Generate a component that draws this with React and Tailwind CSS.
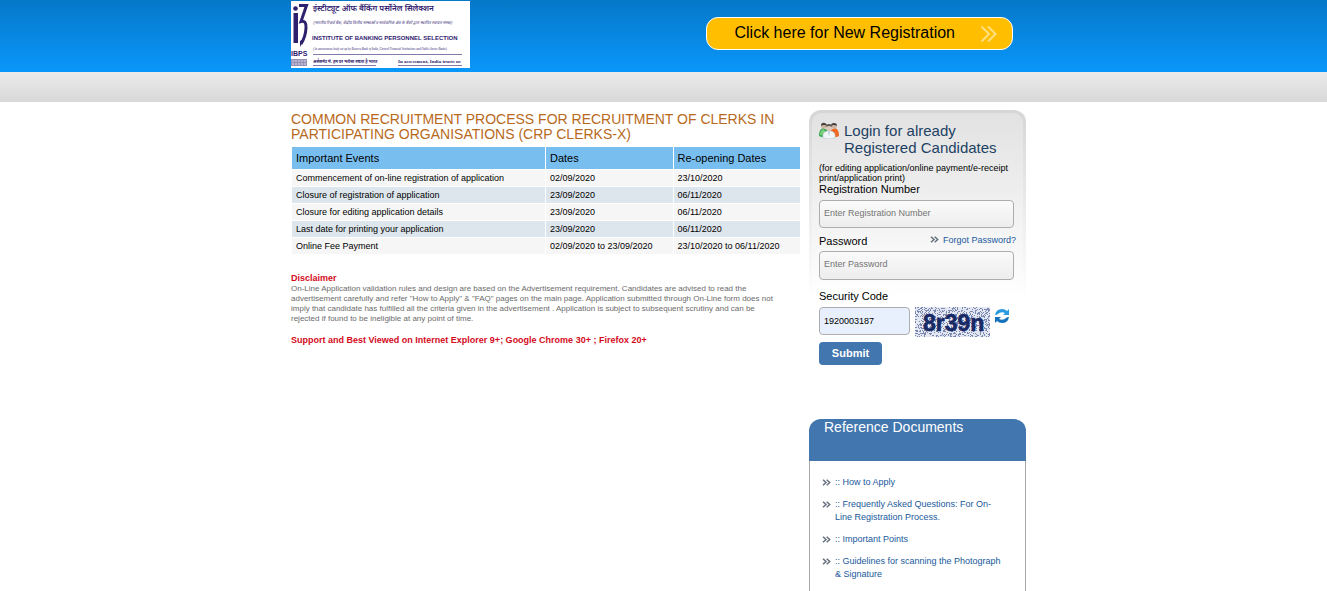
import React from "react";

const events = [
  ["Commencement of on-line registration of application", "02/09/2020", "23/10/2020"],
  ["Closure of registration of application", "23/09/2020", "06/11/2020"],
  ["Closure for editing application details", "23/09/2020", "06/11/2020"],
  ["Last date for printing your application", "23/09/2020", "06/11/2020"],
  ["Online Fee Payment", "02/09/2020 to 23/09/2020", "23/10/2020 to 06/11/2020"],
];

const documents = [
  "How to Apply",
  "Frequently Asked Questions: For On-Line Registration Process.",
  "Important Points",
  "Guidelines for scanning the Photograph & Signature",
];

function speckles(count, width, height) {
  let seed = 4271;
  const next = () => {
    seed = (seed * 16807) % 2147483647;
    return seed / 2147483647;
  };
  let d = "";
  for (let i = 0; i < count; i += 1) {
    d += `M${Math.floor(next() * width)} ${Math.floor(next() * height)}h1v1h-1z`;
  }
  return d;
}

const darkDots = speckles(900, 75, 30);

function Logo() {
  const hindi = "'Noto Sans Devanagari', 'Noto Sans', 'Lohit Devanagari', sans-serif";
  return (
    <svg viewBox="0 0 179 67" className="block h-[67px] w-[179px] shrink-0 bg-white" role="img" aria-label="Institute of Banking Personnel Selection">
      <g fill="#30216f">
        <circle cx="4.500" cy="7.500" r="2.300" />
        <path d="M2.500 12H7V42H2.500z" />
        <path d="M8 4.500H15.500L10 20.500Q15.500 19 15 27Q14.500 36 10 43" fill="none" stroke="#30216f" strokeWidth="3" />
        <path d="M9 40L14 37L9 46z" />
        <text x="0" y="55" fontFamily="'Liberation Sans', sans-serif" fontWeight="700" fontSize="7">IBPS</text>
        <path d="M0 58h16v7H0z" opacity=".5" />
        <path d="M1 60h14M1 63h14" stroke="#fff" strokeWidth="1" strokeDasharray="2 1" opacity=".7" />
        <text x="22" y="10" fontFamily={hindi} fontWeight="600" fontSize="8">इंस्टीट्यूट ऑफ बैंकिंग पर्सोनेल सिलेक्शन</text>
        <text x="22" y="23" fontFamily={hindi} fontStyle="italic" fontSize="4">(भारतीय रिज़र्व बैंक, केंद्रीय वित्तीय संस्थाओं व सार्वजनिक क्षेत्र के बैंकों द्वारा स्थापित स्वायत्त संस्था)</text>
        <text x="21" y="39" fontFamily="'Liberation Sans', sans-serif" fontWeight="700" fontSize="6">INSTITUTE OF BANKING PERSONNEL SELECTION</text>
        <text x="22" y="49" fontFamily="'Liberation Serif', serif" fontStyle="italic" fontSize="3">(An autonomous body set up by Reserve Bank of India, Central Financial Institutions and Public Sector Banks)</text>
        <path d="M22 53h149v1H22zM22 64h63v1H22zM107 64h64v1h-64z" opacity=".6" />
        <text x="22" y="62" fontFamily={hindi} fontWeight="700" fontSize="4">असेसमेंट में, हम पर भरोसा रखता है भारत</text>
        <text x="107" y="62" fontFamily="'Liberation Serif', serif" fontWeight="700" fontSize="5">In assessment, India trusts us</text>
      </g>
    </svg>
  );
}

function Chevrons({ className }) {
  return (
    <svg viewBox="0 0 9 7" className={className} fill="none" stroke="currentColor" strokeWidth="1.5" aria-hidden="true">
      <path d="M1 .7L4 3.5L1 6.3M4.7 .7L7.7 3.5L4.7 6.3" />
    </svg>
  );
}

function LargeChevrons() {
  return (
    <svg viewBox="0 0 18 18" className="mt-[2px] h-[18px] w-[18px] shrink-0" fill="none" stroke="#ffdf80" strokeWidth="2" aria-hidden="true">
      <path d="M1.500 1.500L9 9L1.500 16.500M8 1.500L15.500 9L8 16.500" />
    </svg>
  );
}

function People() {
  return (
    <svg viewBox="0 0 20 17" className="h-[17px] w-5 shrink-0" aria-hidden="true">
      <path d="M0 14Q0 7 4 6L9 8L8 15Q3 16 0 14z" fill="#35a853" />
      <path d="M1 13Q1 8 5 7L6 10Q4 14 1 13z" fill="#7ccf7c" />
      <path d="M20 14Q20 7 16 6L11 8L12 15Q17 16 20 14z" fill="#ee6a24" />
      <circle cx="5" cy="4" r="2.8" fill="#cdb5a3" />
      <path d="M2 4Q2 0 6 1Q8 2 8 4Q5 2 2 4z" fill="#46413f" />
      <circle cx="15" cy="4" r="2.8" fill="#cdb5a3" />
      <path d="M12 4Q12 1 15 1Q18 1 18 4Q15 2 12 4z" fill="#46413f" />
      <path d="M4 16Q3 10 8 9H12Q17 10 16 16Q10 18 4 16z" fill="#f1f5f8" stroke="#b9c5cd" strokeWidth=".6" />
      <circle cx="10" cy="6" r="3" fill="#dcc8ba" />
      <path d="M7 5Q7 2 10 2Q13 2 13 5Q10 3 7 5z" fill="#5b5552" />
      <path d="M9 9.500h2l-1 5z" fill="#a8cce0" />
    </svg>
  );
}

function Captcha() {
  return (
    <svg viewBox="0 0 75 30" className="ml-[5px] h-[30px] w-[75px] shrink-0 bg-[#e3e7f2]" role="img" aria-label="Security code image">
      <path d={darkDots} fill="#7a88b2" />
      <text x="8" y="24" fontFamily="'Liberation Sans', sans-serif" fontWeight="700" fontSize="23" fill="#182a66" stroke="#182a66" strokeWidth=".6">8r39n</text>
    </svg>
  );
}

function Refresh() {
  return (
    <svg viewBox="0 0 16 16" className="block h-4 w-4" aria-hidden="true">
      <path d="M1 7Q2 1 8 1Q11 1 13 3L15 1V7H9L11 5Q7 3 4 6Q3 7 1 7z" fill="#2a9be0" />
      <path d="M15 9Q14 15 8 15Q5 15 3 13L1 15V9H7L5 11Q9 13 12 10Q13 9 15 9z" fill="#1673bb" />
    </svg>
  );
}

const field =
  "block w-full rounded border border-[#adadad] bg-linear-to-b from-[#fafafa] to-[#ededed] px-1 pb-[3px] text-[9px] text-black outline-none placeholder:text-[#757575]";

export default function App() {
  return (
    <div className="flex min-h-screen flex-col bg-white font-['Liberation_Sans',Arial,sans-serif] text-black">
      <header className="bg-linear-to-b from-[#0578c8] to-[#0a97fb]">
        <div className="mx-auto flex h-[72px] w-full max-w-[745px] items-start justify-between pt-px pr-[23px]">
          <Logo />
          <a href="#register" className="mt-4 flex h-[33px] items-center gap-[25px] rounded-xl border border-white bg-[#ffbf00] pr-[14px] pb-px pl-[27px] text-[16px]">
            Click here for New Registration
            <LargeChevrons />
          </a>
        </div>
      </header>
      <div className="h-[30px] bg-linear-to-b from-[#ebebeb] to-[#d8d8d8]" />

      <main className="mx-auto flex w-full max-w-[745px] flex-1 gap-2 pr-[10px]">
        <section className="min-w-0 flex-1 pt-[10px]">
          <h1 className="text-[14px] leading-[15px] text-[#b8691b]">
            COMMON RECRUITMENT PROCESS FOR RECRUITMENT OF CLERKS IN PARTICIPATING ORGANISATIONS (CRP CLERKS-X)
          </h1>
          <table className="mt-1 w-full table-fixed border-separate border-spacing-px text-left">
            <thead>
              <tr className="h-[22px] bg-[#78bff0] text-[11px]">
                <th className="w-1/2 px-1 py-0 font-normal">Important Events</th>
                <th className="w-1/4 px-1 py-0 font-normal">Dates</th>
                <th className="w-1/4 px-1 py-0 font-normal">Re-opening Dates</th>
              </tr>
            </thead>
            <tbody>
              {events.map((row) => (
                <tr key={row[0]} className="h-4 bg-[#f6f6f6] text-[9px] leading-[14px] even:bg-[#dde6ed]">
                  {row.map((cell, i) => (
                    <td key={i} className="px-1 py-0 whitespace-nowrap">{cell}</td>
                  ))}
                </tr>
              ))}
            </tbody>
          </table>
          <h2 className="mt-[17px] text-[9px] leading-[12px] font-bold text-[#d40a1c]">Disclaimer</h2>
          <p className="pr-5 text-[8px] leading-[10px] text-[#6b6b6b]">
            On-Line Application validation rules and design are based on the Advertisement requirement. Candidates are advised to read the advertisement carefully and refer "How to Apply" &amp; "FAQ" pages on the main page. Application submitted through On-Line form does not imply that candidate has fulfilled all the criteria given in the advertisement . Application is subject to subsequent scrutiny and can be rejected if found to be ineligible at any point of time.
          </p>
          <p className="mt-[10px] text-[9px] leading-[12px] font-bold text-[#d40a1c]">
            Support and Best Viewed on Internet Explorer 9+; Google Chrome 30+ ; Firefox 20+
          </p>
        </section>

        <aside className="flex w-[217px] shrink-0 flex-col pt-2">
          <form className="rounded-t-xl bg-linear-to-b from-[#d6d6d6] to-white to-[190px] px-[3px] pt-[3px]" onSubmit={(e) => e.preventDefault()}>
            <div className="rounded-t-[10px] bg-linear-to-b from-[#e2e2e2] to-white to-[185px] px-[7px] pt-[9px]">
              <div className="flex gap-[5px]">
                <People />
                <h2 className="text-[15px] leading-[17px] text-[#1d4163]">Login for already<br />Registered Candidates</h2>
              </div>
              <p className="mt-[7px] text-[9px] leading-[10px]">(for editing application/online payment/e-receipt print/application print)</p>
              <label htmlFor="reg" className="block text-[11px] leading-[13px]">Registration Number</label>
              <div className="pt-1 pr-[2px]">
                <input id="reg" type="text" placeholder="Enter Registration Number" className={`${field} h-7`} />
              </div>
              <div className="mt-[3px] flex items-center justify-between">
                <label htmlFor="pwd" className="pt-1 text-[11px] leading-[13px]">Password</label>
                <a href="#forgot" className="flex items-center gap-1 text-[9px] leading-[12px] text-[#19599c]">
                  <Chevrons className="h-[7px] w-[9px] text-[#66717e]" />
                  Forgot Password?
                </a>
              </div>
              <div className="pt-[3px] pr-[2px]">
                <input id="pwd" type="password" placeholder="Enter Password" className={`${field} h-[29px]`} />
              </div>
              <label htmlFor="code" className="mt-[10px] block text-[11px] leading-[13px]">Security Code</label>
              <div className="mt-1 flex items-start">
                <input id="code" type="text" defaultValue="1920003187" className="h-7 w-[91px] rounded border border-[#adadad] bg-[#e8f0fe] px-1 text-[9px] outline-none" />
                <Captcha />
                <button type="button" aria-label="Refresh security code" className="mt-px ml-1">
                  <Refresh />
                </button>
              </div>
              <button type="submit" className="mt-[5px] block h-[23px] w-[63px] rounded bg-[#4276ae] text-[11px] font-bold text-white">Submit</button>
            </div>
          </form>

          <section className="mt-[54px] flex flex-1 flex-col">
            <h2 className="h-[42px] rounded-t-xl bg-[#4276ae] px-[15px] text-[14px] leading-[17px] text-white">Reference Documents</h2>
            <ul className="flex flex-1 flex-col gap-[9px] border-x border-[#a9a9a9] pt-[15px] pr-5 pb-[5px] pl-3 text-[9px] leading-[13px]">
              {documents.map((doc) => (
                <li key={doc}>
                  <a href="#doc" className="flex gap-1 text-[#19599c]">
                    <Chevrons className="mt-[3px] h-[7px] w-[9px] shrink-0 text-[#66717e]" />
                    <span>{`:: ${doc}`}</span>
                  </a>
                </li>
              ))}
            </ul>
          </section>
        </aside>
      </main>
    </div>
  );
}
